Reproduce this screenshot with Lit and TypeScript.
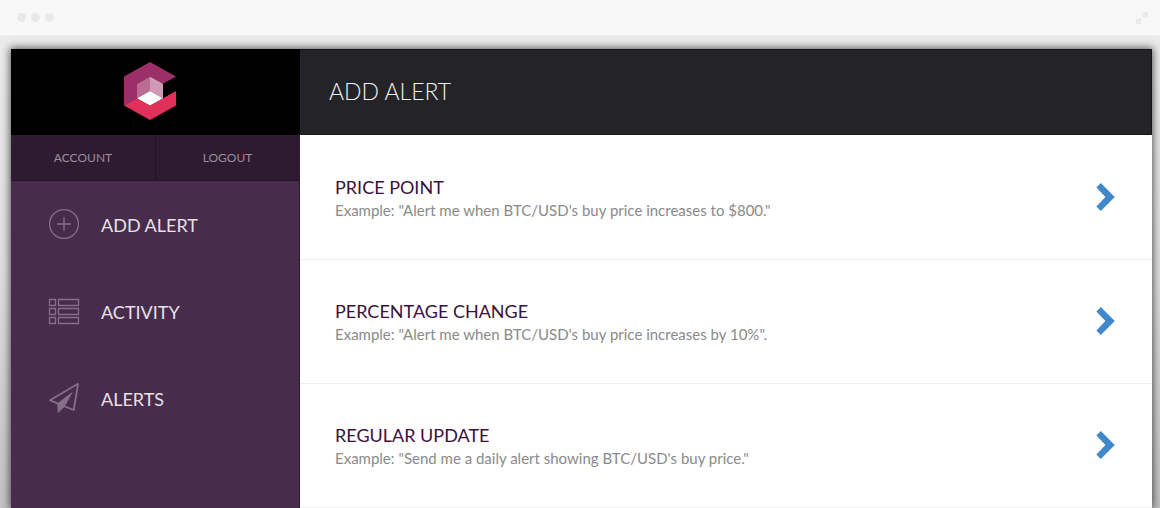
import { LitElement, html, css, svg } from "lit";
import { customElement } from "lit/decorators.js";

interface AlertType {
  title: string;
  example: string;
}

const ALERT_TYPES: AlertType[] = [
  { title: "Price point", example: `Example: "Alert me when BTC/USD's buy price increases to $800."` },
  { title: "Percentage change", example: `Example: "Alert me when BTC/USD's buy price increases by 10%".` },
  { title: "Regular update", example: `Example: "Send me a daily alert showing BTC/USD's buy price."` },
];

const NAV = [
  {
    label: "Add alert",
    icon: svg`<circle cx="16" cy="16" r="14.4"/><path d="M16 9.2v13.6M9.2 16h13.6"/>`,
  },
  {
    label: "Activity",
    icon: svg`<path d="M1.5 4.5h6v6h-6zM10.5 4.5h20v6h-20zM1.5 13.5h6v6h-6zM10.5 13.5h20v6h-20zM1.5 22.5h6v6h-6zM10.5 22.5h20v6h-20z"/>`,
  },
  {
    label: "Alerts",
    icon: svg`<path stroke-width="1.8" stroke-linejoin="round" d="M30 1.8 2 18.2l8.3 3.6L25.8 28z"/><path fill="currentColor" stroke="none" d="M25 9.5 9.2 21.4 9.8 31.2l6.8-6.4z"/>`,
  },
];

@customElement("app-root")
export class AppRoot extends LitElement {
  static styles = css`
    :host {
      display: flex;
      flex-direction: column;
      height: 100vh;
      overflow: hidden;
      font-family: Lato, "Open Sans", sans-serif;
      background: #eaeaea;
    }
    * { box-sizing: border-box; }
    a { color: inherit; text-decoration: none; }
    .chrome {
      flex: none;
      display: flex;
      align-items: center;
      justify-content: space-between;
      height: 36px;
      padding: 0 12px 0 17px;
      background: #f8f8f8;
      border-bottom: 1px solid #f0f0f0;
    }
    .dots { display: flex; gap: 5px; }
    .dot { width: 9px; height: 9px; border-radius: 50%; background: #e9e9e9; }
    .expand {
      display: flex;
      padding: 0;
      border: 0;
      background: none;
      color: #e9e9e9;
    }
    .backdrop {
      flex: 1;
      min-height: 0;
      display: flex;
      padding: 13px 8px 0 11px;
      background: linear-gradient(#ebebeb, #dedede 50%, #c2c2c2);
    }
    .window {
      flex: 1;
      display: flex;
      box-shadow: 0 0 8px 1px rgba(0, 0, 0, 0.65);
    }
    .side {
      flex: none;
      display: flex;
      flex-direction: column;
      width: 289px;
      background: #482c4c;
      border-right: 1px solid #2e1b31;
    }
    .brand {
      display: flex;
      align-items: center;
      justify-content: center;
      height: 86px;
      margin-right: -1px;
      padding: 0 12px 2px 0;
      background: #000;
    }
    .account {
      display: grid;
      grid-template-columns: 1fr 1fr;
      height: 46px;
      background: #2e1b31;
      border-bottom: 1px solid #261529;
    }
    .account a {
      display: flex;
      align-items: center;
      justify-content: center;
      font-size: 12px;
      line-height: 16px;
      color: #98909a;
      text-transform: uppercase;
    }
    .account a + a { border-left: 1px solid #1f1022; }
    .nav { display: flex; flex-direction: column; }
    .nav a {
      display: flex;
      align-items: center;
      gap: 21px;
      height: 87px;
      padding-left: 37px;
      font-size: 18px;
      line-height: 24px;
      color: #e6e1e7;
      text-transform: uppercase;
    }
    .nav svg {
      fill: none;
      stroke: currentColor;
      color: #866f89;
      stroke-width: 1.3;
    }
    .main {
      flex: 1;
      min-width: 0;
      background: #fff;
      overflow: hidden;
    }
    .head {
      display: flex;
      align-items: center;
      height: 86px;
      padding: 0 29px 2px;
      background: #242328;
      border: 1px solid #151418;
      border-left: 0;
    }
    h1, h2, p { margin: 0; }
    h1 {
      font-size: 23px;
      line-height: 32px;
      font-weight: 300;
      color: #f0f0f0;
      text-transform: uppercase;
    }
    .list { padding-top: 1px; }
    .row {
      display: flex;
      align-items: center;
      justify-content: space-between;
      height: 124px;
      padding: 0 37px 0 35px;
      border-bottom: 1px solid #f1f1f1;
    }
    h2 {
      font-size: 18px;
      line-height: 24px;
      font-weight: 400;
      color: #3c0f42;
      text-transform: uppercase;
    }
    p {
      font-size: 15px;
      line-height: 22px;
      font-weight: 400;
      color: #8a8a8a;
    }
    .chev { flex: none; }
  `;

  render() {
    return html`
      <div class="chrome">
        <div class="dots"><span class="dot"></span><span class="dot"></span><span class="dot"></span></div>
        <button class="expand" aria-label="Full screen">
          <svg width="12" height="12" viewBox="0 0 12 12" fill="currentColor">
            <path d="M6 0h6v6L9.9 3.9 7.6 6.2 5.9 4.5 8.1 2.1zM6 12H0V6l2.1 2.1 2.2-2.3L6 7.5 3.9 9.9z"/>
          </svg>
        </button>
      </div>
      <div class="backdrop">
        <div class="window">
          <aside class="side">
            <div class="brand">
              <svg width="54" height="60" viewBox="0 0 54 60" role="img" aria-label="Logo">
                <path fill="#9c2f67" d="M27 1 53 15.5 40 22.7 27 15.5 14 22.7V37.5L1 44.5V15.5z"/>
                <path fill="#e1315b" d="M1 44.5 14 37.3 27 44.5 53 30V44.5L27 59z"/>
                <path fill="#bc6b95" d="M27 15.5V30L14 37.3V22.7z"/>
                <path fill="#d099b6" d="M27 15.5V30l13 7.3V22.7z"/>
                <path fill="#fff" d="M27 30 40 37.3 27 44.5 14 37.3z"/>
              </svg>
            </div>
            <div class="account">
              <a href="#account">Account</a>
              <a href="#logout">Logout</a>
            </div>
            <nav class="nav">
              ${NAV.map(
                (n) => html`<a href="#"><svg width="32" height="34" viewBox="0 0 32 34" aria-hidden="true">${n.icon}</svg><span>${n.label}</span></a>`
              )}
            </nav>
          </aside>
          <main class="main">
            <header class="head"><h1>Add alert</h1></header>
            <div class="list">
              ${ALERT_TYPES.map(
                (t) => html`
                  <a class="row" href="#">
                    <div>
                      <h2>${t.title}</h2>
                      <p>${t.example}</p>
                    </div>
                    <svg class="chev" width="19" height="30" viewBox="0 0 19 30" aria-hidden="true">
                      <path fill="#3f89ca" d="M4.8 0 18.8 14 4.8 28 .4 23.6 9.4 14 .4 4.4z"/>
                    </svg>
                  </a>
                `
              )}
            </div>
          </main>
        </div>
      </div>
    `;
  }
}
